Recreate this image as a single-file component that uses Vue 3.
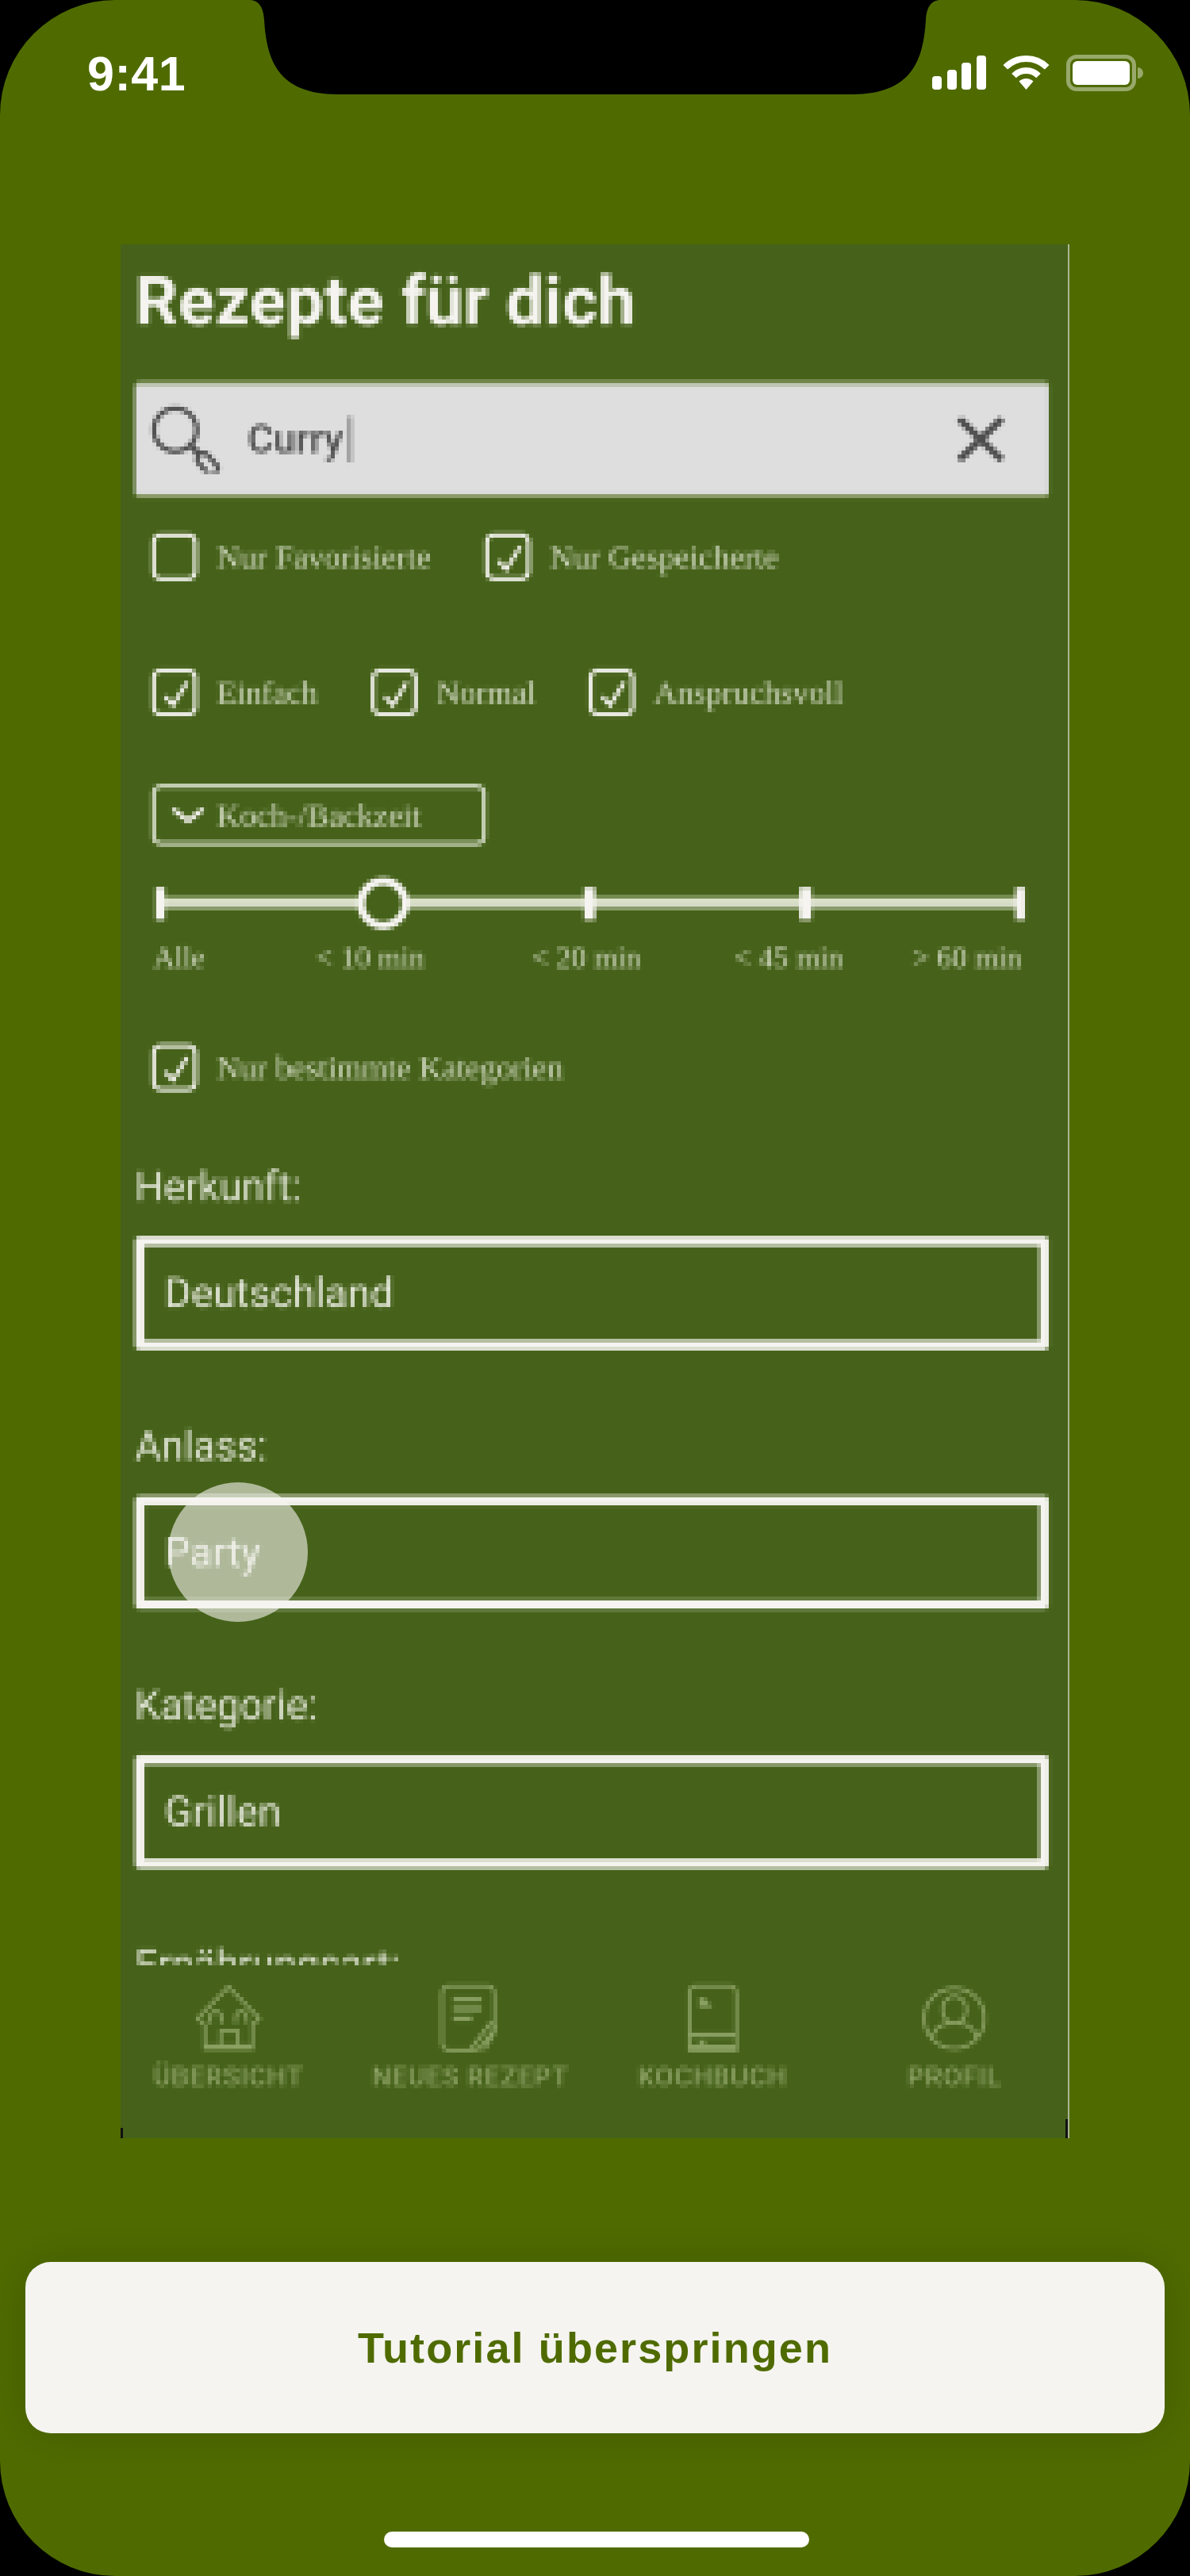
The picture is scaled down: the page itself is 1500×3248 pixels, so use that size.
<template>
  <div class="device">
    <div class="phone">
      <!-- the app screen is a low-res screenshot in the original, this reproduces that -->
      <svg class="defs" width="0" height="0">
        <filter id="lowres" x="0" y="0" width="100%" height="100%" color-interpolation-filters="sRGB">
          <feGaussianBlur in="SourceGraphic" stdDeviation="1.5" result="soft" />
          <feFlood x="2" y="2" width="1" height="1" flood-color="#000" />
          <feComposite width="5" height="5" />
          <feTile result="grid" />
          <feComposite in="soft" in2="grid" operator="in" />
          <feMorphology operator="dilate" radius="2" />
        </filter>
      </svg>

      <svg class="notch" width="1500" height="120" viewBox="0 0 1500 120">
        <path d="M314 0C327 0 332 10 333 25C336 75 350 119 426 119L1074 119C1150 119 1164 75 1167 25C1168 10 1173 0 1186 0Z" fill="#000" />
      </svg>

      <header class="status-bar">
        <span class="time">9:41</span>
        <div class="status-icons">
          <svg width="68" height="44" viewBox="0 0 68 44" fill="#fff">
            <rect x="0" y="27" width="12" height="17" rx="4" />
            <rect x="19" y="19" width="12" height="25" rx="4" />
            <rect x="37" y="10" width="12" height="34" rx="4" />
            <rect x="56" y="1" width="12" height="43" rx="4" />
          </svg>
          <svg width="63" height="44" viewBox="0 0 63 44" fill="none" stroke="#fff" stroke-width="8">
            <path d="M5.3 15.800A37 37 0 0 1 57.700 15.800" />
            <path d="M16 26.500A22 22 0 0 1 47 26.500" />
            <path d="M31.500 44L22.500 33.500A13 13 0 0 1 40.500 33.500Z" fill="#fff" stroke="none" />
          </svg>
          <div class="battery"><div class="battery-level"></div></div>
        </div>
      </header>

      <main class="screen">
        <div class="screen-inner">
          <h1 class="title">Rezepte für dich</h1>

          <div class="search">
            <svg class="search-icon" width="92" height="84" viewBox="0 0 92 84" fill="none" stroke="#4d4d4d">
              <circle cx="31" cy="30" r="27" stroke-width="6" />
              <path d="M52 51L62 62" stroke-width="8" />
              <rect x="64" y="58" width="15" height="30" rx="6" transform="rotate(-42 71 73)" stroke-width="6" />
            </svg>
            <span class="search-text">Curry</span>
            <span class="caret"></span>
            <svg class="search-clear" width="60" height="56" viewBox="0 0 60 56" fill="none" stroke="#4d4d4d" stroke-width="9">
              <path d="M3 2L57 54M57 2L3 54" />
            </svg>
          </div>

          <div class="check-row row-first">
            <label v-for="c in firstChecks" :key="c.text" class="check" :style="{ width: c.width + 'px' }">
              <span class="box">
                <svg v-if="c.on" width="48" height="50" viewBox="0 0 48 50" fill="none" stroke="#f5f4f0" stroke-width="5">
                  <path d="M12 30L22 41L40 12" />
                </svg>
              </span>
              <span class="check-text">{{ c.text }}</span>
            </label>
          </div>

          <div class="check-row row-second">
            <label v-for="c in levelChecks" :key="c.text" class="check" :style="{ width: c.width + 'px' }">
              <span class="box">
                <svg width="48" height="50" viewBox="0 0 48 50" fill="none" stroke="#f5f4f0" stroke-width="5">
                  <path d="M12 30L22 41L40 12" />
                </svg>
              </span>
              <span class="check-text">{{ c.text }}</span>
            </label>
          </div>

          <button class="dropdown">
            <svg width="42" height="22" viewBox="0 0 42 22" fill="none" stroke="#f5f4f0" stroke-width="6">
              <path d="M2 3L21 18L40 3" />
            </svg>
            <span class="check-text">Koch-/Backzeit</span>
          </button>

          <div class="slider">
            <div class="track"></div>
            <span v-for="t in ticks" :key="t" class="tick" :class="'tick-' + t"></span>
            <span class="thumb"></span>
          </div>
          <div class="slider-labels">
            <span v-for="l in timeLabels" :key="l" class="check-text">{{ l }}</span>
          </div>

          <label class="check check-cat">
            <span class="box">
              <svg width="48" height="50" viewBox="0 0 48 50" fill="none" stroke="#f5f4f0" stroke-width="5">
                <path d="M12 30L22 41L40 12" />
              </svg>
            </span>
            <span class="check-text">Nur bestimmte Kategorien</span>
          </label>

          <section v-for="f in fields" :key="f.label" class="field-group">
            <div class="field-label">{{ f.label }}</div>
            <div class="field">{{ f.value }}</div>
          </section>

          <section class="field-group">
            <div class="field-label">Ernährungsart:</div>
          </section>

          <nav class="tabbar">
            <div class="tab">
              <svg width="82" height="88" viewBox="0 0 82 88" fill="none" stroke="#8ba063" stroke-width="4">
                <path d="M41 4L2 44L11 52V82H71V52L80 44Z" />
                <path d="M11 80H71" stroke-width="7" />
                <path d="M31 82V60H53V82" />
                <path d="M18 50V42A7 7 0 0 1 32 42V50M50 50V42A7 7 0 0 1 64 42V50" />
              </svg>
              <span>ÜBERSICHT</span>
            </div>
            <div class="tab tab-notes">
              <svg width="73" height="88" viewBox="0 0 73 88" fill="none" stroke="#8ba063" stroke-width="4">
                <path d="M42 84H12A9 9 0 0 1 3 75V12A9 9 0 0 1 12 3H60A9 9 0 0 1 69 12V62L56 84" />
                <path d="M17 20H53M17 32H53M17 44H41" stroke-width="6" />
                <path d="M40 82L64 50L71 56L48 84Z" />
              </svg>
              <span>NEUES REZEPT</span>
            </div>
            <div class="tab">
              <svg width="69" height="88" viewBox="0 0 69 88" fill="none" stroke="#8ba063" stroke-width="4">
                <path d="M13 3H56A8 8 0 0 1 64 11V84H5V11A8 8 0 0 1 13 3Z" />
                <path d="M5 65H64M5 80H64" stroke-width="6" />
                <path d="M17 18H24L34 30H17Z" fill="#8ba063" stroke="none" />
                <path d="M17 74H25" stroke-width="5" />
              </svg>
              <span>KOCHBUCH</span>
            </div>
            <div class="tab">
              <svg width="82" height="88" viewBox="0 0 82 88" fill="none" stroke="#8ba063" stroke-width="4">
                <circle cx="41" cy="44" r="38" />
                <ellipse cx="41" cy="33" rx="15" ry="17" />
                <path d="M13 68C17 54 26 50 41 50C56 50 65 54 69 68" />
              </svg>
              <span>PROFIL</span>
            </div>
          </nav>
        </div>

        <!-- tap hint of the tutorial -->
        <div class="tap-hint"></div>
      </main>

      <button class="skip">Tutorial überspringen</button>
      <div class="home-indicator"></div>
    </div>
  </div>
</template>

<script setup>
const firstChecks = [
  { text: 'Nur Favorisierte', on: false, width: 420 },
  { text: 'Nur Gespeicherte', on: true, width: 400 }
];

const levelChecks = [
  { text: 'Einfach', width: 277 },
  { text: 'Normal', width: 274 },
  { text: 'Anspruchsvoll', width: 340 }
];

const ticks = ['a', 'b', 'c', 'd'];
const timeLabels = ['Alle', '< 10 min', '< 20 min', '< 45 min', '> 60 min'];

const fields = [
  { label: 'Herkunft:', value: 'Deutschland' },
  { label: 'Anlass:', value: 'Party' },
  { label: 'Kategorie:', value: 'Grillen' }
];
</script>

<style scoped>
.device { width: 1500px; height: 3248px; background: #000; overflow: hidden; }
.phone {
  position: relative; width: 1500px; height: 3248px; background: #4f6b00;
  border-radius: 145px; overflow: hidden;
  display: flex; flex-direction: column; align-items: flex-start;
}
.defs { position: absolute; }
.notch { position: absolute; top: 0; left: 0; }

.status-bar {
  width: 100%; height: 308px; box-sizing: border-box; flex-shrink: 0;
  display: flex; justify-content: space-between; align-items: flex-start;
  padding: 69px 68px 0 110px;
}
.time { font: 700 61px/48px "Liberation Sans", sans-serif; letter-spacing: 0.5px; color: #fff; }
.status-icons { display: flex; align-items: flex-start; gap: 19px; }
.battery {
  position: relative; width: 88px; height: 46px; box-sizing: border-box;
  border: 5px solid rgba(255, 255, 255, 0.42); border-radius: 13px; padding: 3px;
}
.battery::after {
  content: ""; position: absolute; right: -14px; top: 11px;
  width: 7px; height: 14px; border-radius: 0 7px 7px 0; background: rgba(255, 255, 255, 0.42);
}
.battery-level { width: 100%; height: 100%; background: #fff; border-radius: 6px; }

.screen {
  position: relative; margin-left: 152px; width: 1196px; height: 2388px; flex-shrink: 0;
  background: #46621a; overflow: hidden;
  border-right: 2px solid #a9b594; box-sizing: border-box;
}
.screen::before, .screen::after { content: ""; position: absolute; bottom: 0; background: #111; width: 3px; z-index: 3; }
.screen::before { left: 0; height: 13px; }
.screen::after { right: 0; height: 24px; }
.screen-inner {
  position: relative; height: 100%; box-sizing: border-box; padding: 22px 24px 0 18px;
  background: #46621a; filter: url(#lowres);
}

.title { margin: 0; font: 700 85px/100px Roboto, sans-serif; letter-spacing: 0.4px; color: #f5f4f0; }

.search {
  margin-top: 50px; height: 148px; box-sizing: border-box; background: #dedede;
  border: solid #8b9b68; border-width: 5px 0; border-radius: 6px;
  display: flex; align-items: center; padding-left: 20px;
}
.search-text { margin-left: 30px; font: 500 50px/56px Roboto, sans-serif; color: #4d4d4d; }
.caret { width: 6px; height: 58px; margin-left: 5px; background: #999; }
.search-clear { margin-left: auto; margin-right: 56px; }

.check-row { display: flex; padding-left: 21px; }
.row-first { margin-top: 44px; }
.row-second { margin-top: 111px; }
.check { display: flex; align-items: center; gap: 24px; flex-shrink: 0; }
.box {
  width: 58px; height: 60px; box-sizing: border-box; flex-shrink: 0;
  border: 5px solid #f5f4f0; border-radius: 12px;
}
.box svg { display: block; }
.check-text { font: 400 41px/48px "Liberation Serif", serif; color: #d3dbc3; white-space: nowrap; }

.dropdown {
  display: flex; align-items: center; gap: 15px; margin: 86px 0 0 21px;
  width: 422px; height: 77px; box-sizing: border-box; padding: 0 0 0 20px;
  background: transparent; border: 5px solid #d8decb; border-radius: 12px;
}

.slider { position: relative; margin-top: 40px; height: 66px; }
.track { position: absolute; left: 26px; width: 1096px; top: 25px; height: 16px; background: linear-gradient(#c5d0ab 0 30%, #fbfaf6 30% 65%, #95a578 65%); }
.tick { position: absolute; top: 13px; height: 41px; background: #f5f4f0; }
.tick-a { left: 26px; width: 12px; }
.tick-b { left: 566px; width: 14px; }
.tick-c { left: 838px; width: 15px; }
.tick-d { left: 1110px; width: 12px; }
.thumb {
  position: absolute; left: 280px; top: 0; width: 66px; height: 66px; box-sizing: border-box;
  background: #46621a; border: 10px solid #f5f4f0; border-radius: 50%;
}
.slider-labels {
  display: grid; grid-template-columns: 205px 272px 255px 225px auto; align-items: center;
  margin-top: 11px; padding-left: 23px; height: 40px;
}
.slider-labels .check-text { font-size: 38px; }

.check-cat { margin: 93px 0 0 21px; }

.field-group { margin-top: 92px; }
.check-cat + .field-group { margin-top: 91px; }
.field-label { height: 60px; font: 400 51px/60px Roboto, sans-serif; color: #dfe4d3; }
.field {
  margin-top: 32px; height: 143px; box-sizing: border-box;
  border: 12px solid #f5f4f0; border-radius: 6px;
  padding-left: 25px; display: flex; align-items: center;
  font: 400 52px/60px Roboto, sans-serif; color: #e6e9dc;
}

.tabbar {
  position: absolute; left: 0; right: 7px; bottom: 0; height: 219px;
  background: #46621a; display: flex; justify-content: center; gap: 65px;
  padding-top: 24px; box-sizing: border-box;
}
.tab {
  width: 240px; display: flex; flex-direction: column; align-items: center; gap: 10px;
  font: 500 34px/38px Roboto, sans-serif; letter-spacing: 1px; color: #8ba063; white-space: nowrap;
}
.tab svg { display: block; }
.tab-notes svg { margin-left: -6px; }

.tap-hint {
  position: absolute; left: 60px; top: 1561px; width: 176px; height: 176px;
  border-radius: 50%; background: rgba(245, 244, 240, 0.6);
}

.skip {
  margin: 156px 0 0 32px; width: 1436px; height: 216px; flex-shrink: 0;
  background: #f5f4f0; border: none; border-radius: 32px;
  box-shadow: 0 0 60px rgba(0, 0, 0, 0.14);
  font: 700 54px/64px "Liberation Sans", sans-serif; letter-spacing: 2.1px; color: #4f6b00;
}
.home-indicator { margin: 124px 0 0 484px; width: 536px; height: 20px; border-radius: 10px; background: #fff; flex-shrink: 0; }
</style>
